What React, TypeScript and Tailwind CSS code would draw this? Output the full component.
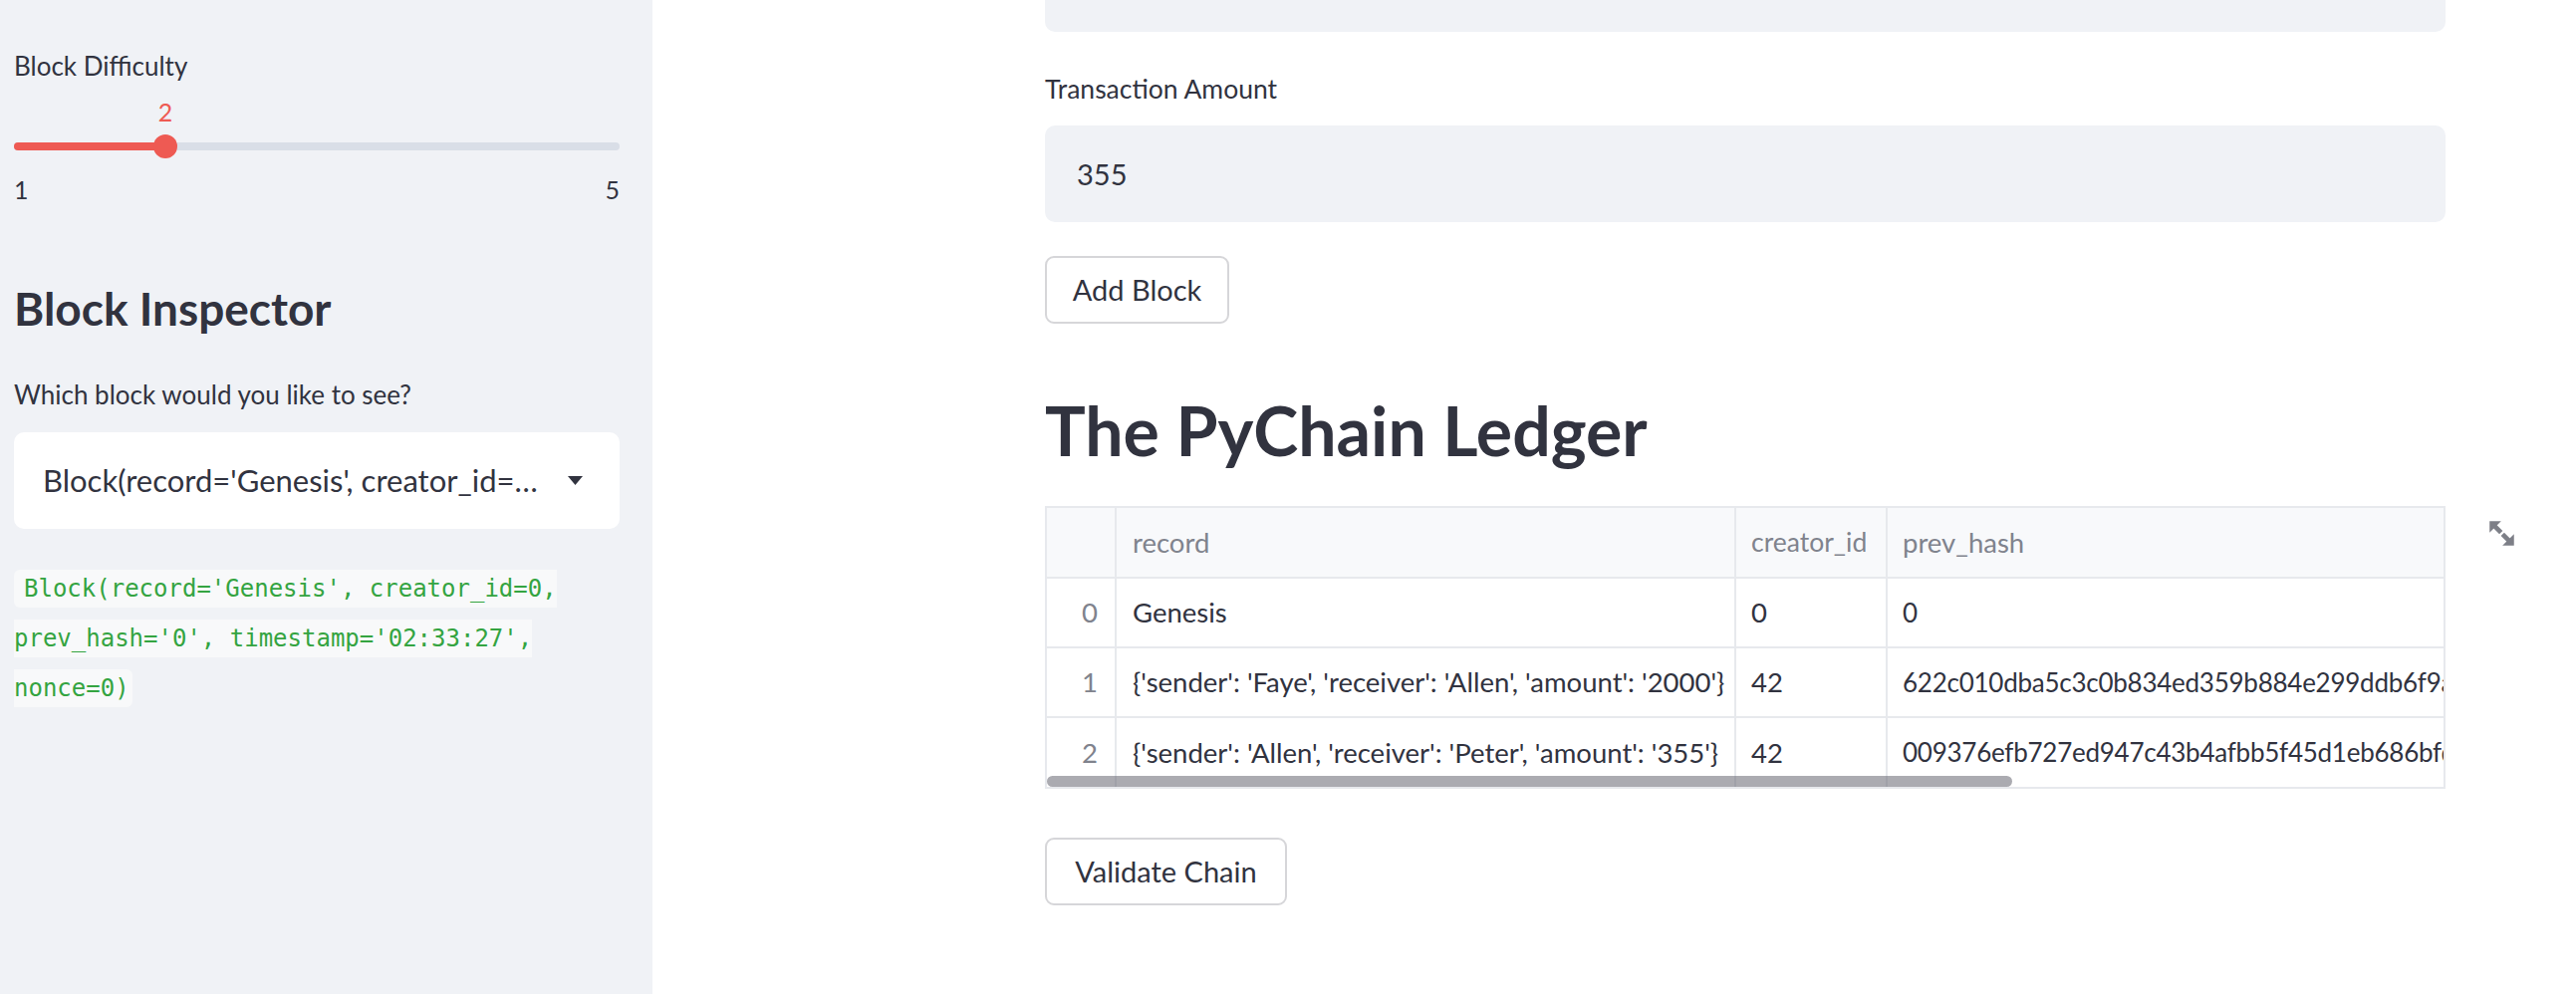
import React from 'react';

const difficulty = { min: 1, max: 5, value: 2 };

const ledger = [
  { idx: 0, record: 'Genesis', creatorId: '0', prevHash: '0' },
  {
    idx: 1,
    record: "{'sender': 'Faye', 'receiver': 'Allen', 'amount': '2000'}",
    creatorId: '42',
    prevHash: '622c010dba5c3c0b834ed359b884e299ddb6f9a3e1c7b0d2f84a6c91e5d07b3f',
  },
  {
    idx: 2,
    record: "{'sender': 'Allen', 'receiver': 'Peter', 'amount': '355'}",
    creatorId: '42',
    prevHash: '009376efb727ed947c43b4afbb5f45d1eb686bfd2a3c8e1f04b7d9a6c52e81f0',
  },
];

function Slider() {
  const pct = ((difficulty.value - difficulty.min) / (difficulty.max - difficulty.min)) * 100;
  return (
    <div className="flex flex-col">
      <div className="relative h-[45px]">
        <span
          className="absolute top-[15px] -translate-x-1/2 text-[25px] leading-[30px] text-[#ee5a53]"
          style={{ left: `${pct}%` }}
        >
          {difficulty.value}
        </span>
      </div>
      <div className="relative flex h-[39px] items-center">
        <div className="h-[8px] w-full rounded-full bg-[#d9dee7]" />
        <div
          className="absolute left-0 top-1/2 h-[8px] -translate-y-1/2 rounded-full bg-[#ee5a53]"
          style={{ width: `${pct}%` }}
        />
        <div
          className="absolute top-1/2 h-[24px] w-[24px] -translate-x-1/2 -translate-y-1/2 rounded-full bg-[#ee5a53]"
          style={{ left: `${pct}%` }}
        />
      </div>
      <div className="mt-[9px] flex justify-between text-[25px] leading-[30px] text-[#31333f]">
        <span>{difficulty.min}</span>
        <span>{difficulty.max}</span>
      </div>
    </div>
  );
}

function ExpandIcon() {
  return (
    <svg width="31" height="31" viewBox="0 0 24 24" fill="#7d7f87">
      <polygon points="2.5,2.5 11.5,2.5 2.5,11.5" />
      <line x1="5" y1="5" x2="11.4" y2="11.4" stroke="#7d7f87" strokeWidth="3.6" />
      <polygon points="21.5,21.5 12.5,21.5 21.5,12.5" />
      <line x1="12.6" y1="12.6" x2="19" y2="19" stroke="#7d7f87" strokeWidth="3.6" />
    </svg>
  );
}

function LedgerTable() {
  const cols = 'grid grid-cols-[70px_622px_152px_1100px]';
  return (
    <div className="relative mt-[33px] w-[1406px]">
      <div className="relative overflow-hidden border-2 border-[#e7e9ed] text-[27.5px]">
        <div className={`${cols} h-[71px] border-b-2 border-[#e7e9ed] bg-[#f8f9fb] text-[#80838d]`}>
          <div className="border-r-2 border-[#e7e9ed]" />
          <div className="flex items-center border-r-2 border-[#e7e9ed] pl-[16px]">record</div>
          <div className="flex items-center border-r-2 border-[#e7e9ed] pl-[15px] text-[26.5px]">creator_id</div>
          <div className="flex items-center pl-[15px] whitespace-nowrap">prev_hash</div>
        </div>
        {ledger.map((row, i) => (
          <div
            key={`ledger-row-${row.idx}`}
            className={`${cols} ${i === ledger.length - 1 ? 'h-[69px]' : 'h-[70px] border-b-2'} border-[#e7e9ed]`}
          >
            <div className="flex items-center justify-end border-r-2 border-[#e7e9ed] pr-[17px] text-[#80838d]">
              {row.idx}
            </div>
            <div className="flex items-center whitespace-nowrap border-r-2 border-[#e7e9ed] pl-[16px]">
              {row.record}
            </div>
            <div className="flex items-center border-r-2 border-[#e7e9ed] pl-[15px]">{row.creatorId}</div>
            <div className="flex items-center whitespace-nowrap pl-[15px] text-[26px] tracking-[-0.25px]">
              {row.prevHash}
            </div>
          </div>
        ))}
        <div className="absolute bottom-0 left-0 h-[11px] w-[969px] rounded-full bg-[rgba(100,100,110,0.54)]" />
      </div>
      <div className="absolute left-[1447px] top-[12px]">
        <ExpandIcon />
      </div>
    </div>
  );
}

export default function App() {
  return (
    <div className="flex h-[998px] w-full overflow-hidden bg-white font-[Lato,'Noto_Sans',sans-serif] text-[#31333f]">
      <aside className="flex w-[655px] shrink-0 flex-col bg-[#f0f2f6] pl-[14px] pr-[33px]">
        <div className="mt-[50px] text-[26px] leading-[32px]">Block Difficulty</div>
        <Slider />
        <h2 className="mt-[77px] text-[46px] font-bold leading-[56px]">Block Inspector</h2>
        <div className="mt-[42px] text-[26px] leading-[32px]">Which block would you like to see?</div>
        <div className="mt-[22px] flex h-[97px] items-center justify-between rounded-[10px] bg-white pl-[29px] pr-[37px]">
          <span className="whitespace-nowrap text-[31px]">
            Block(record='Genesis', creator_id=<span className="tracking-[2px]">…</span>
          </span>
          <svg width="15" height="9" viewBox="0 0 15 9" className="shrink-0">
            <polygon points="0,0 15,0 7.5,9" fill="#31333f" />
          </svg>
        </div>
        <div className="mt-[41px] flex flex-col items-start gap-[12px] font-['DejaVu_Sans_Mono',monospace] text-[24px] leading-[38px] text-[#34a441]">
          <span className="h-[38px] rounded-l-[6px] bg-[#f8f9fa] pl-[10px] whitespace-pre">Block(record='Genesis', creator_id=0,</span>
          <span className="h-[38px] bg-[#f8f9fa] whitespace-pre">prev_hash='0', timestamp='02:33:27',</span>
          <span className="h-[38px] rounded-r-[6px] bg-[#f8f9fa] pr-[3px] whitespace-pre">nonce=0)</span>
        </div>
      </aside>

      <main className="flex flex-1 flex-col items-start pl-[394px] text-[26px]">
        <div className="mt-[-65px] h-[97px] w-[1406px] rounded-[10px] bg-[#f0f2f6]" />
        <div className="mt-[41px] text-[26.5px] leading-[32px]">Transaction Amount</div>
        <div className="mt-[21px] flex h-[97px] w-[1406px] items-center rounded-[10px] bg-[#f0f2f6] pl-[32px] text-[29px]">
          355
        </div>
        <button className="mt-[34px] flex h-[68px] w-[185px] items-center justify-center rounded-[9px] border-2 border-[#d6d6d9] bg-white text-[29px]">
          Add Block
        </button>
        <h1 className="mt-[64px] text-[68px] font-bold leading-[86px]">The PyChain Ledger</h1>
        <LedgerTable />
        <button className="mt-[49px] flex h-[68px] w-[243px] items-center justify-center rounded-[9px] border-2 border-[#d6d6d9] bg-white text-[29px]">
          Validate Chain
        </button>
      </main>
    </div>
  );
}
